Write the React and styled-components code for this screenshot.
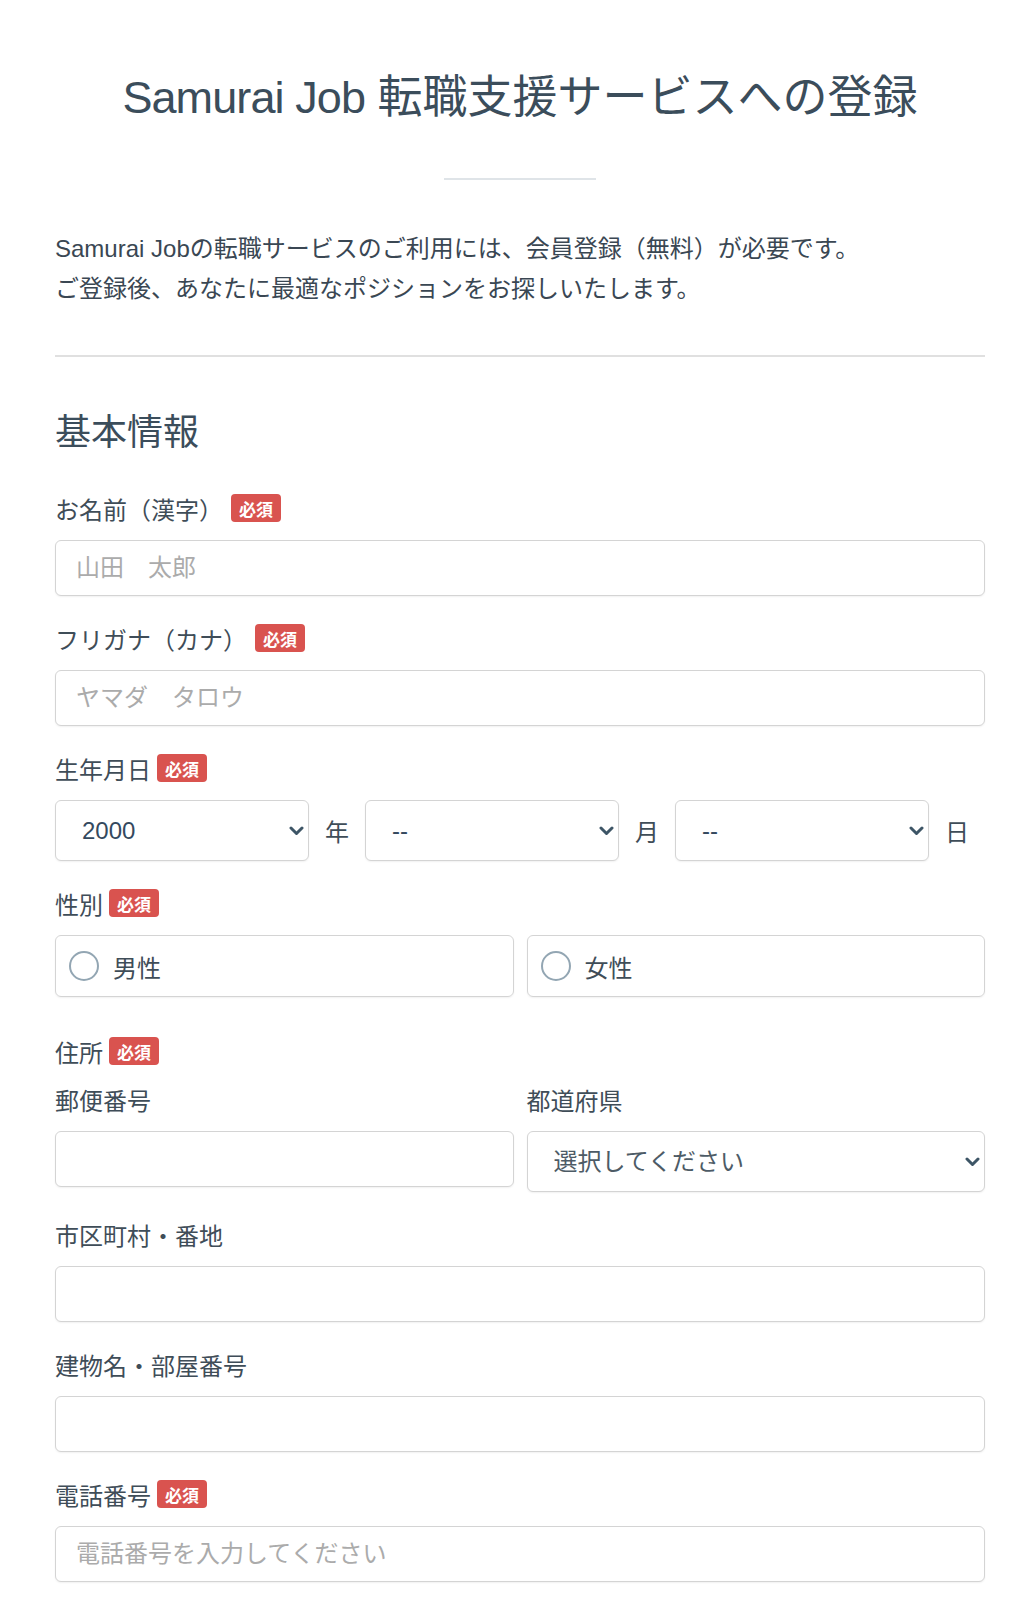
import React from "react";
import styled, { createGlobalStyle } from "styled-components";

const GlobalStyle = createGlobalStyle`
  body {
    margin: 0;
    background: #fff;
    font-family: "Liberation Sans", "Noto Sans CJK JP", sans-serif;
    color: #3d4b56;
  }
  * {
    box-sizing: border-box;
  }
`;

const Page = styled.main`
  padding: 70px 40px 40px 55px;
`;

const Title = styled.h1`
  margin: 0;
  font-size: 45px;
  font-weight: 400;
  line-height: 55px;
  text-align: center;
  color: #3b4d5b;
`;

const Latin = styled.span`
  letter-spacing: -0.9px;
`;

const ShortRule = styled.div`
  width: 152px;
  height: 2px;
  background: #dfe4e8;
  margin: 53px auto 0;
`;

const Intro = styled.p`
  margin: 49px 0 0;
  font-size: 24px;
  line-height: 40px;
  color: #3a4753;
`;

const Rule = styled.hr`
  margin: 46px 0 0;
  border: none;
  height: 2px;
  background: #e0e0e0;
`;

const SectionTitle = styled.h2`
  margin: 51px 0 35px;
  font-size: 36px;
  font-weight: 400;
  line-height: 50px;
  color: #3b4d5b;
`;

const Field = styled.div`
  margin-bottom: ${(p) => p.$bottom || 27}px;
`;

const Label = styled.div`
  display: flex;
  align-items: center;
  height: 30px;
  margin-bottom: ${(p) => p.$gap || 17}px;
  font-size: 24px;
  color: #3f4d58;
`;

const Badge = styled.span`
  display: inline-flex;
  align-items: center;
  height: 28px;
  margin-left: ${(p) => p.$offset || 6}px;
  padding: 0 8px;
  border-radius: 4px;
  background: #d9534f;
  color: #fff;
  font-size: 17px;
  font-weight: 700;
`;

const TextInput = styled.input`
  display: block;
  width: 100%;
  height: 56px;
  padding: 0 20px;
  border: 1px solid #d4d4d4;
  border-radius: 6px;
  box-shadow: 0 1px 2px rgba(0, 0, 0, 0.06);
  font-family: inherit;
  font-size: 24px;
  color: #3d4b56;
  background: #fff;

  &::placeholder {
    color: #ababab;
  }
`;

const SelectBox = styled.div`
  position: relative;
  flex: 1;
`;

const Select = styled.select`
  display: block;
  width: 100%;
  height: 61px;
  padding: 0 26px;
  border: 1px solid #d4d4d4;
  border-radius: 6px;
  box-shadow: 0 1px 2px rgba(0, 0, 0, 0.06);
  appearance: none;
  background: #fff;
  font-family: inherit;
  font-size: 24px;
  color: ${(p) => (p.$muted ? "#4d5b66" : "#34495e")};
`;

const Chevron = styled.svg`
  position: absolute;
  right: 5px;
  top: 50%;
  width: 15px;
  height: 10px;
  margin-top: -5px;
  pointer-events: none;
`;

const DateRow = styled.div`
  display: flex;
  align-items: center;
`;

const Unit = styled.span`
  margin: 0 16px;
  font-size: 24px;
  color: #3f4d58;
`;

const TwoCols = styled.div`
  display: grid;
  grid-template-columns: 1fr 1fr;
  gap: 13px;
  align-items: start;
`;

const RadioOption = styled.label`
  display: flex;
  align-items: center;
  gap: 14px;
  height: 62px;
  padding-left: 13px;
  border: 1px solid #d4d4d4;
  border-radius: 6px;
  box-shadow: 0 1px 2px rgba(0, 0, 0, 0.06);
  font-size: 24px;
  color: #3f4d58;
`;

const RadioDot = styled.input`
  appearance: none;
  width: 30px;
  height: 30px;
  margin: 0;
  border: 2px solid #93a6b3;
  border-radius: 50%;
  background: #fff;
`;

const Arrow = () => (
  <Chevron viewBox="0 0 15 10">
    <path d="M2 2 L7.5 7.5 L13 2" fill="none" stroke="#3d5566" strokeWidth="3" strokeLinecap="round" strokeLinejoin="round" />
  </Chevron>
);

const DropDown = ({ value, muted }) => (
  <SelectBox>
    <Select defaultValue={value} $muted={muted}>
      <option value={value}>{value}</option>
    </Select>
    <Arrow />
  </SelectBox>
);

export default function App() {
  return (
    <>
      <GlobalStyle />
      <Page>
        <Title>
          <Latin>Samurai Job</Latin> 転職支援サービスへの登録
        </Title>
        <ShortRule />
        <Intro>
          Samurai Jobの転職サービスのご利用には、会員登録（無料）が必要です。
          <br />
          ご登録後、あなたに最適なポジションをお探しいたします。
        </Intro>
        <Rule />

        <SectionTitle>基本情報</SectionTitle>

        <Field>
          <Label>
            お名前（漢字）<Badge $offset={8}>必須</Badge>
          </Label>
          <TextInput type="text" placeholder="山田　太郎" />
        </Field>

        <Field>
          <Label>
            フリガナ（カナ）<Badge $offset={8}>必須</Badge>
          </Label>
          <TextInput type="text" placeholder="ヤマダ　タロウ" />
        </Field>

        <Field>
          <Label>
            生年月日<Badge>必須</Badge>
          </Label>
          <DateRow>
            <DropDown value="2000" />
            <Unit>年</Unit>
            <DropDown value="--" />
            <Unit>月</Unit>
            <DropDown value="--" />
            <Unit>日</Unit>
          </DateRow>
        </Field>

        <Field $bottom={39}>
          <Label>
            性別<Badge>必須</Badge>
          </Label>
          <TwoCols>
            <RadioOption>
              <RadioDot type="radio" name="gender" />
              男性
            </RadioOption>
            <RadioOption>
              <RadioDot type="radio" name="gender" />
              女性
            </RadioOption>
          </TwoCols>
        </Field>

        <Field>
          <Label $gap={18}>
            住所<Badge>必須</Badge>
          </Label>
          <TwoCols>
            <div>
              <Label>郵便番号</Label>
              <TextInput type="text" />
            </div>
            <div>
              <Label>都道府県</Label>
              <DropDown value="選択してください" muted />
            </div>
          </TwoCols>
        </Field>

        <Field>
          <Label>市区町村・番地</Label>
          <TextInput type="text" />
        </Field>

        <Field>
          <Label>建物名・部屋番号</Label>
          <TextInput type="text" />
        </Field>

        <Field>
          <Label>
            電話番号<Badge>必須</Badge>
          </Label>
          <TextInput type="text" placeholder="電話番号を入力してください" />
        </Field>
      </Page>
    </>
  );
}
